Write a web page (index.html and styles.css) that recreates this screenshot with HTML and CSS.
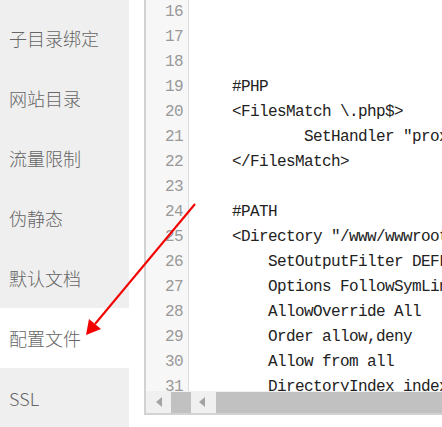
FILE: index.html
```html
<!DOCTYPE html>
<html lang="zh">
<head>
<meta charset="utf-8">
<link rel="stylesheet" href="styles.css">
</head>
<body>
<div class="page">
  <nav class="sidebar">
    <div class="item">子目录绑定</div>
    <div class="item">网站目录</div>
    <div class="item">流量限制</div>
    <div class="item">伪静态</div>
    <div class="item">默认文档</div>
    <div class="item active">配置文件</div>
    <div class="item">SSL</div>
  </nav>
  <div class="editor">
    <div class="body">
      <div class="gutter">
        <div class="ln">16</div><div class="ln">17</div><div class="ln">18</div><div class="ln">19</div>
        <div class="ln">20</div><div class="ln">21</div><div class="ln">22</div><div class="ln">23</div>
        <div class="ln">24</div><div class="ln">25</div><div class="ln">26</div><div class="ln">27</div>
        <div class="ln">28</div><div class="ln">29</div><div class="ln">30</div><div class="ln">31</div>
      </div>
      <div class="code">
        <div class="line"> </div>
        <div class="line"> </div>
        <div class="line"> </div>
        <div class="line">#PHP</div>
        <div class="line">&lt;FilesMatch \.php$&gt;</div>
        <div class="line">        SetHandler "proxy:unix:/tmp/php-cgi-74.sock|fcgi://localhost"</div>
        <div class="line">&lt;/FilesMatch&gt;</div>
        <div class="line"> </div>
        <div class="line">#PATH</div>
        <div class="line">&lt;Directory "/www/wwwroot/www.example.com"&gt;</div>
        <div class="line">    SetOutputFilter DEFLATE</div>
        <div class="line">    Options FollowSymLinks</div>
        <div class="line">    AllowOverride All</div>
        <div class="line">    Order allow,deny</div>
        <div class="line">    Allow from all</div>
        <div class="line">    DirectoryIndex index.php index.html</div>
      </div>
    </div>
    <div class="hscroll">
      <div class="sb-arrow a1"></div>
      <div class="sb-thumb t1"></div>
      <div class="sb-arrow a2"></div>
      <div class="sb-thumb t2"></div>
    </div>
  </div>
</div>
<svg class="pointer" width="442" height="427" viewBox="0 0 442 427">
  <line x1="195" y1="204" x2="95" y2="324" stroke="#f20000" stroke-width="2"/>
  <polygon points="86,335 89,319 101,329" fill="#f20000"/>
</svg>
</body>
</html>
```
FILE: styles.css
```css
html, body {
  margin: 0;
  padding: 0;
  background: #fff;
  width: 442px;
  height: 427px;
  overflow: hidden;
}
.page {
  display: flex;
  width: 442px;
  height: 427px;
  gap: 15px;
}
.sidebar {
  width: 129px;
  flex: none;
  background: #efefef;
  padding-top: 8px;
  box-sizing: border-box;
  font-family: "Noto Sans CJK SC", "Liberation Sans", sans-serif;
}
.item {
  height: 60px;
  display: flex;
  align-items: center;
  padding-left: 9px;
  font-size: 18px;
  font-weight: 300;
  color: #666;
}
.item.active {
  background: #fff;
}
.editor {
  flex: 1;
  min-width: 0;
  height: 413px;
  border-left: 2px solid #d2d2d2;
  border-bottom: 2px solid #d2d2d2;
  display: flex;
  flex-direction: column;
  overflow: hidden;
}
.body {
  flex: 1;
  display: flex;
  overflow: hidden;
  min-height: 0;
}
.gutter {
  width: 43px;
  flex: none;
  background: #f7f7f7;
  border-right: 1px solid #dcdcdc;
  padding-right: 5px;
  box-sizing: border-box;
  text-align: right;
  font-family: "Liberation Mono", monospace;
  font-size: 16px;
  letter-spacing: -0.6px;
  color: #999;
}
.ln, .line {
  height: 25px;
  line-height: 25px;
  flex: none;
}
.code {
  flex: 1;
  padding-left: 43px;
  font-family: "Liberation Mono", monospace;
  font-size: 16px;
  letter-spacing: -0.6px;
  color: #222;
  overflow: hidden;
}
.line {
  white-space: pre;
}
.hscroll {
  height: 22px;
  flex: none;
  background: #f0f0f0;
  display: flex;
  align-items: stretch;
}
.sb-arrow {
  display: flex;
  align-items: center;
  justify-content: center;
  flex: none;
}
.sb-arrow::before {
  content: "";
  border-right: 6px solid #a3a3a3;
  border-top: 5px solid transparent;
  border-bottom: 5px solid transparent;
}
.a1 { width: 21px; margin-left: 2px; }
.a2 { width: 22px; }
.sb-thumb {
  background: #c1c1c1;
  margin-top: 1px;
  flex: none;
}
.t1 { width: 20px; margin-left: 2px; }
.t2 { flex: 1; margin-left: 3px; }
.pointer {
  position: absolute;
  left: 0;
  top: 0;
  pointer-events: none;
}
```
